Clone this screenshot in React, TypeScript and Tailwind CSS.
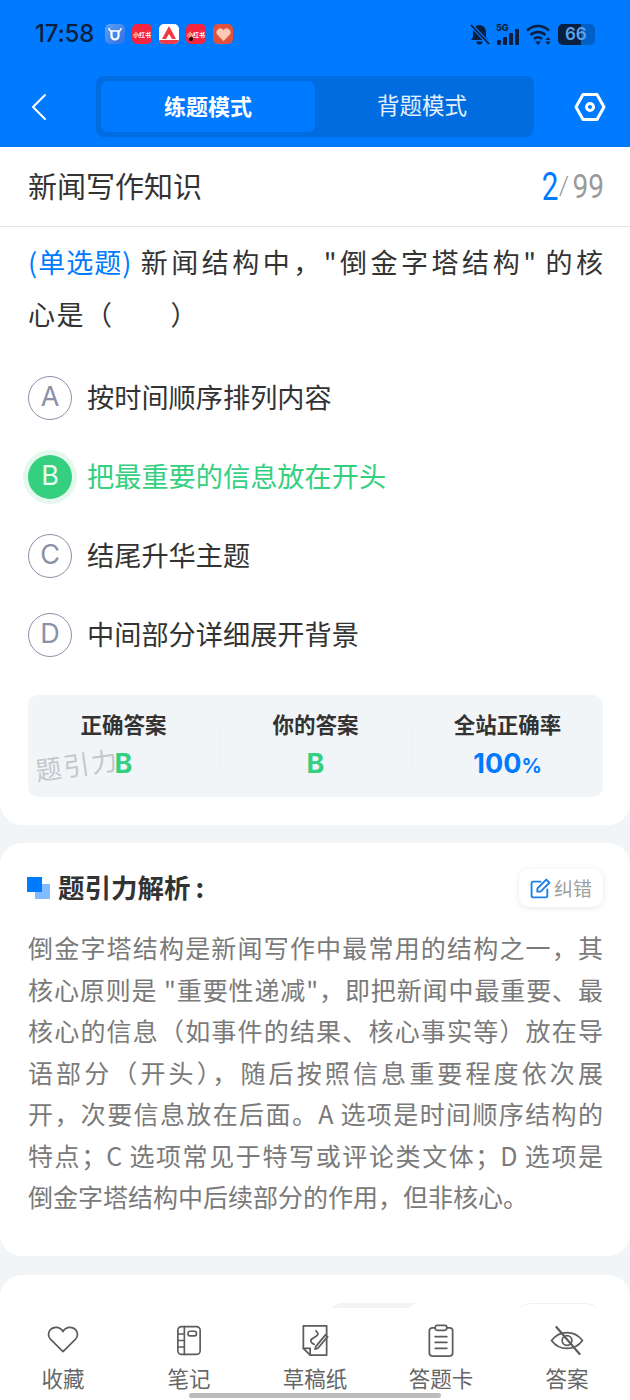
import type { ReactNode } from "react";

const cjk = "font-['Noto_Sans_CJK_SC','Noto_Sans',sans-serif]";

const options = [
  { key: "A", text: "按时间顺序排列内容" },
  { key: "B", text: "把最重要的信息放在开头", picked: true },
  { key: "C", text: "结尾升华主题" },
  { key: "D", text: "中间部分详细展开背景" },
];

const analysisLines = [
  "倒金字塔结构是新闻写作中最常用的结构之一，其",
  "核心原则是 \"重要性递减\"，即把新闻中最重要、最",
  "核心的信息（如事件的结果、核心事实等）放在导",
  "语部分（开头），随后按照信息重要程度依次展",
  "开，次要信息放在后面。A 选项是时间顺序结构的",
  "特点；C 选项常见于特写或评论类文体；D 选项是",
];

function AppIcon({ className, children }: { className: string; children?: ReactNode }) {
  return (
    <div className={`flex h-5 w-5 items-center justify-center overflow-hidden rounded-[5px] ${className}`}>
      {children}
    </div>
  );
}

function StatusBar() {
  return (
    <div className="flex h-[68px] items-start justify-between pl-[35px] pr-[35px] pt-[21px]">
      <div className="flex items-center">
        <span className="w-[61px] font-['Inter',sans-serif] text-[24px] font-medium leading-[26px] tracking-[-0.2px] text-[#0b1f3f]">
          17:58
        </span>
        <div className="ml-[9px] flex gap-[7px]">
          <AppIcon className="bg-linear-to-br from-[#62a0f2] to-[#2d6ee6]">
            <svg width="16" height="16" viewBox="0 0 16 16" fill="none" stroke="#fff" strokeWidth="2.2">
              <path d="M4.500 5v5a3.500 3.500 0 0 0 7 0V5" />
              <path d="M2 2c0 2 1 3 2.500 3h7C13 5 14 4 14 2" strokeWidth="1.400" />
            </svg>
          </AppIcon>
          <AppIcon className="bg-[#f5243f]">
            <span className="text-[6px] font-bold text-white">小红书</span>
          </AppIcon>
          <AppIcon className="bg-white">
            <svg width="20" height="20" viewBox="0 0 20 20">
              <path d="M10 2L3 15h4l3-5 3 5h4z" fill="#ef3a45" />
              <rect x="0" y="16" width="20" height="4" fill="#ef3a45" />
            </svg>
          </AppIcon>
          <AppIcon className="relative bg-[#f5243f]">
            <span className="text-[6px] font-bold text-white">小红书</span>
            <div className="absolute bottom-[3px] left-[3px] h-[4px] w-[4px] rounded-full bg-black" />
          </AppIcon>
          <AppIcon className="bg-[#e0523e]">
            <svg width="17" height="17" viewBox="0 0 16 16">
              <path d="M8 14L2 8a3.500 3.500 0 0 1 6-4 3.500 3.500 0 0 1 6 4z" fill="#f9c9b2" />
            </svg>
          </AppIcon>
        </div>
      </div>
      <div className="flex items-start gap-[6px] pt-[3px]">
        <svg width="20" height="21" viewBox="0 0 20 21" fill="#0b1f3f">
          <path d="M9.500 1a6.500 6.500 0 0 0-6.500 6.500V13l-2 3h17l-2-3V7.500A6.500 6.500 0 0 0 9.500 1z" />
          <path d="M6.500 17.500a3 3 0 0 0 6 0z" />
          <path d="M1 1l18 19" stroke="#007aff" strokeWidth="4" />
          <path d="M1 1l18 19" stroke="#0b1f3f" strokeWidth="1.800" />
        </svg>
        <div className="relative h-[21px] w-[24px]">
          <span className="absolute left-0 top-[-2px] font-['Inter',sans-serif] text-[9px] font-extrabold leading-[11px] text-[#0b1f3f]">5G</span>
          <div className="absolute bottom-0 left-[1px] flex items-end gap-[2px]">
            <div className="h-[5px] w-1 rounded-[1px] bg-[#0b1f3f]" />
            <div className="h-[8px] w-1 rounded-[1px] bg-[#0b1f3f]" />
            <div className="h-[12px] w-1 rounded-[1px] bg-[#0b1f3f]" />
            <div className="h-[16px] w-1 rounded-[1px] bg-[#0b1f3f]" />
          </div>
        </div>
        <svg width="26" height="21" viewBox="0 0 26 21" fill="none" stroke="#0b1f3f" strokeWidth="2.600">
          <path d="M1 6.500c6.500-6 15.500-6 22 0" />
          <path d="M4.500 11c4.500-4 10.500-4 15 0" />
          <path d="M8 15c2.500-2.200 5.500-2.200 8 0" />
          <path d="M12 21l-3-3.500h6z" fill="#0b1f3f" stroke="none" />
          <path d="M22 13l-2.500 3h5zM22 21l-2.500-3.500h5z" fill="#0b1f3f" stroke="none" />
        </svg>
        <div className="relative flex h-[21px] w-[37px] items-center overflow-hidden rounded-[5px] bg-[#0060c8]">
          <div className="absolute inset-y-0 left-0 w-[23px] bg-[#0b1f3f]" />
          <span className="relative ml-[7px] font-['Inter',sans-serif] text-[17px] font-semibold leading-none text-[#5ea3ea]">66</span>
        </div>
      </div>
    </div>
  );
}

function Header() {
  return (
    <div className="bg-[#007aff]">
      <StatusBar />
      <div className="flex h-[79px] items-start pl-[30px] pr-[24px] pt-2">
        <div className="flex h-[61px] w-[66px] items-center">
          <svg width="18" height="28" viewBox="0 0 18 28" fill="none" stroke="#fff" strokeWidth="2" strokeLinecap="round" strokeLinejoin="round">
            <path d="M15 2L3 14l12 12" />
          </svg>
        </div>
        <div className={`flex h-[61px] w-[438px] rounded-[8px] bg-[#006ce0] p-[5px] ${cjk}`}>
          <div className="flex w-[214px] items-center justify-center rounded-[7px] bg-[#007aff] pb-[3px] text-[22px] font-bold text-white">练题模式</div>
          <div className="flex flex-1 items-center justify-center pb-[3px] text-[22.500px] text-white/90">背题模式</div>
        </div>
        <div className="ml-auto flex h-[61px] items-center">
          <svg width="32" height="30" viewBox="0 0 32 30" fill="none" stroke="#fff" strokeWidth="3" strokeLinejoin="round">
            <path d="M9 2.500h14L30 15l-7 12.500H9L2 15z" />
            <circle cx="16" cy="15" r="3.500" />
          </svg>
        </div>
      </div>
    </div>
  );
}

function OptionRow({ label, text, picked }: { label: string; text: string; picked?: boolean }) {
  return (
    <div className="flex h-[79px] items-center">
      {picked ? (
        <div className="ml-[-5px] mr-[-5px] flex h-[54px] w-[54px] items-center justify-center rounded-full bg-[#e4f8ee]">
          <div className="flex h-11 w-11 items-center justify-center rounded-full bg-[#35d07f] font-['Inter',sans-serif] text-[27px] text-[#e9fbf2]">
            {label}
          </div>
        </div>
      ) : (
        <div className="flex h-11 w-11 items-center justify-center rounded-full border border-[#8b90a8] font-['Inter',sans-serif] text-[27px] text-[#8b90a8]">
          {label}
        </div>
      )}
      <span className={`ml-[15px] pb-[3px] text-[27.200px] ${picked ? "text-[#35d07f]" : "text-[#333]"}`}>{text}</span>
    </div>
  );
}

function StatCell({ label, children }: { label: string; children: ReactNode }) {
  return (
    <div className="flex flex-1 flex-col items-center">
      <div className="text-[21.500px] font-bold leading-[30px] text-[#333]">{label}</div>
      <div className="mt-[9px] font-['Inter',sans-serif] text-[27px] font-bold leading-[32px]">{children}</div>
    </div>
  );
}

function QuestionCard() {
  return (
    <div className="rounded-b-[22px] bg-white">
      <div className="flex h-[80px] items-center justify-between border-b border-[#e4e4e4] pl-[28px] pr-[27px]">
        <div className="pb-[2px] text-[29px] text-[#333]">新闻写作知识</div>
        <div className="flex items-center font-['Roboto',sans-serif] text-[#9a9a9a]">
          <span className="inline-block w-[16px] scale-x-[0.78] text-center text-[38px] leading-[40px] text-[#007aff]">2</span>
          <span className="ml-[3px] text-[26px] font-light">/</span>
          <span className="ml-[1px] inline-block w-[33px] scale-x-[0.85] text-right text-[33px] leading-[36px]">99</span>
        </div>
      </div>
      <div className="pb-[28px] pl-[28px] pr-[27px]">
        <div className="pt-[9px] text-[27px] leading-[52px] text-[#333]">
          <div className="[text-align-last:justify]">
            <span className="mr-[5px] inline-block tracking-[1px] text-[#007aff]">(单选题)</span>新闻结构中，"倒金字塔结构" 的核
          </div>
          <div className="tracking-[1.500px]">心是（　　）</div>
        </div>
        <div className="mt-[18px]">
          {options.map((o) => (
            <OptionRow key={o.key} label={o.key} text={o.text} picked={o.picked} />
          ))}
        </div>
        <div className="relative mt-[21px] flex h-[102px] items-start rounded-[10px] bg-[#f2f5f8] pt-[14px]">
          <StatCell label="正确答案">
            <span className="text-[#35d07f]">B</span>
          </StatCell>
          <div className="mt-[18px] h-[38px] w-px bg-[#edf0f3]" />
          <StatCell label="你的答案">
            <span className="text-[#35d07f]">B</span>
          </StatCell>
          <div className="mt-[18px] h-[38px] w-px bg-[#edf0f3]" />
          <StatCell label="全站正确率">
            <span className="text-[#007aff]">100<span className="text-[20px]">%</span></span>
          </StatCell>
          <div className="absolute left-[7px] top-[52px] -rotate-[8deg] text-[26px] leading-[34px] tracking-[2px] text-[#c4c7cb]">题引力</div>
        </div>
      </div>
    </div>
  );
}

function AnalysisCard() {
  return (
    <div className="mt-[18px] h-[413px] rounded-[22px] bg-white pl-[28px] pr-[27px]">
      <div className="flex items-start justify-between pt-[26px]">
        <div className="flex items-center">
          <div className="relative ml-[-1px] mt-[2px] h-[22px] w-[23px]">
            <div className="absolute bottom-0 right-0 h-[15px] w-[15px] bg-[#80bcff]" />
            <div className="absolute left-0 top-0 h-[15px] w-[15px] bg-[#007aff]" />
          </div>
          <div className="ml-[8px] text-[26.500px] font-bold leading-[36px] text-[#333]">
            题引力解析<span className="ml-[5px]">:</span>
          </div>
        </div>
        <div className="flex h-[38px] w-[84px] items-center justify-center gap-[3px] rounded-[10px] bg-white shadow-[0_1px_6px_rgba(0,0,0,0.1)]">
          <svg width="21" height="21" viewBox="0 0 20 20" fill="none" stroke="#1d82e8" strokeWidth="1.800" strokeLinecap="round" strokeLinejoin="round">
            <path d="M16.500 11v6a1.500 1.500 0 0 1-1.500 1.500H3A1.500 1.500 0 0 1 1.500 17V5A1.500 1.500 0 0 1 3 3.500h7" />
            <path d="M15.500 1.500l3 3-8.500 8.500H7v-3z" />
          </svg>
          <span className="text-[19px] text-[#a0a0a0]">纠错</span>
        </div>
      </div>
      <div className="mt-[20px] text-[25px] leading-[41.500px] text-[#7a7a7a]">
        {analysisLines.map((line) => (
          <div key={line} className="[text-align-last:justify]">{line}</div>
        ))}
        <div>倒金字塔结构中后续部分的作用，但非核心。</div>
      </div>
    </div>
  );
}

function BottomItem({ label, children }: { label: string; children: ReactNode }) {
  return (
    <div className="flex w-[126px] flex-col items-center">
      <div className="flex h-[36px] items-center justify-center">{children}</div>
      <div className="mt-[5px] text-[21.500px] leading-[30px] text-[#666]">{label}</div>
    </div>
  );
}

function BottomBar() {
  const s = { fill: "none", stroke: "#5c5c5c", strokeWidth: 1.8, strokeLinecap: "round", strokeLinejoin: "round" } as const;
  return (
    <div className="absolute inset-x-0 bottom-0 h-[92px] bg-white">
      <div className="flex pt-[14px]">
        <BottomItem label="收藏">
          <svg width="32" height="28" viewBox="0 0 34 30" {...s}>
            <path d="M17 27.500L3.500 14A8 8 0 0 1 3 4.500a8.500 8.500 0 0 1 14 1.500 8.500 8.500 0 0 1 14-1.500A8 8 0 0 1 30.500 14z" />
          </svg>
        </BottomItem>
        <BottomItem label="笔记">
          <svg width="26" height="33" viewBox="0 0 28 34" {...s}>
            <rect x="2" y="2" width="24" height="30" rx="4" />
            <path d="M9 2v30M2 10h7M2 17h7M2 24h7" />
            <rect x="13" y="7" width="9" height="5" rx="2" />
          </svg>
        </BottomItem>
        <BottomItem label="草稿纸">
          <svg width="30" height="33" viewBox="0 0 30 34" {...s}>
            <path d="M3 2h24v30H10l-7-7z" />
            <path d="M10 32v-7H3" />
            <path d="M16 7c3 3 3 4-2 7-5 2-4 5 0 7" />
            <path d="M26 11L16 23l-1 3 3-1 10-12" />
          </svg>
        </BottomItem>
        <BottomItem label="答题卡">
          <svg width="28" height="33" viewBox="0 0 28 34" {...s}>
            <path d="M8 4H5a3 3 0 0 0-3 3v23a3 3 0 0 0 3 3h18a3 3 0 0 0 3-3V7a3 3 0 0 0-3-3h-3" />
            <rect x="8" y="1.500" width="12" height="5" rx="2" />
            <path d="M8 13h12M8 19h12M8 25h12" />
          </svg>
        </BottomItem>
        <BottomItem label="答案">
          <svg width="36" height="29" viewBox="0 0 36 30" {...s}>
            <path d="M2 15C10 4 26 4 34 15 26 26 10 26 2 15z" />
            <circle cx="18" cy="15" r="5" />
            <path d="M7 1l24 28" strokeWidth="2.200" />
          </svg>
        </BottomItem>
      </div>
      <div className="absolute bottom-[2px] left-[189px] h-[5px] w-[252px] rounded-full bg-[#bcbcbc]" />
    </div>
  );
}

export default function App() {
  return (
    <div className={`relative h-[1400px] w-[630px] overflow-hidden bg-[#f2f5f8] ${cjk}`}>
      <Header />
      <QuestionCard />
      <AnalysisCard />
      <div className="mt-[19px] flex h-[200px] justify-end gap-[40px] rounded-t-[22px] bg-white pr-[28px] pt-[28px]">
        <div className="flex h-[40px] w-[147px] justify-end rounded-[16px] bg-[#f3f3f3]">
          <div className="h-[40px] w-[70px] rounded-[16px] bg-white" />
        </div>
        <div className="h-[40px] w-[88px] rounded-[16px] border border-[#f2f2f2]" />
      </div>
      <BottomBar />
    </div>
  );
}
